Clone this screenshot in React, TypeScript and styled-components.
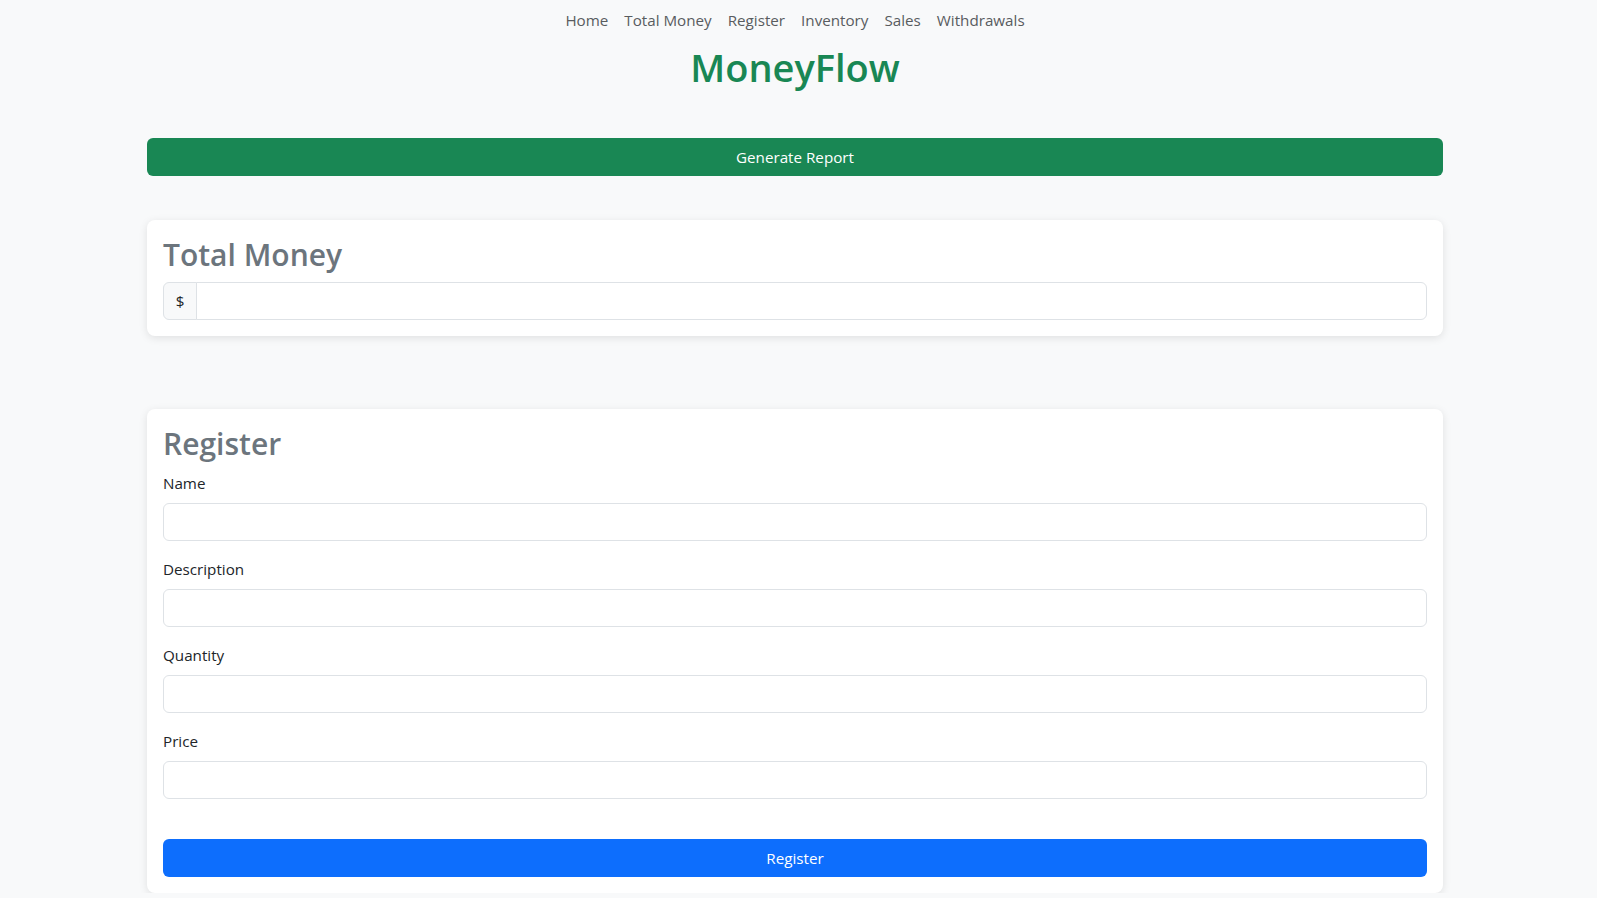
import React from "react";
import styled, { createGlobalStyle } from "styled-components";

const GlobalStyle = createGlobalStyle`
  html, body {
    margin: 0;
    padding: 0;
    background-color: #f8f9fa;
    font-family: "Open Sans", "Noto Sans", "Liberation Sans", sans-serif;
    color: #212529;
  }
  * {
    box-sizing: border-box;
  }
`;

const Page = styled.div`
  padding: 8px 7px 0 0;
`;

const Nav = styled.nav`
  display: flex;
  justify-content: center;
  gap: 16px;
  height: 24px;
  line-height: 24px;
`;

const NavLink = styled.a`
  font-size: 15.2px;
  color: #595c5f;
  text-decoration: none;
  cursor: pointer;
`;

const Title = styled.h1`
  margin: 11px 0 0;
  text-align: center;
  font-size: 38px;
  font-weight: 600;
  line-height: 48px;
  color: #198754;
`;

const Container = styled.main`
  width: 1296px;
  margin: 47px auto 0;
`;

const Button = styled.button<{ $variant: "success" | "primary" }>`
  display: block;
  width: 100%;
  height: 38px;
  border: none;
  border-radius: 6px;
  font-family: inherit;
  font-size: 15.2px;
  color: #fff;
  cursor: pointer;
  background-color: ${(p) => (p.$variant === "success" ? "#198754" : "#0d6efd")};
`;

const Card = styled.section<{ $top: number }>`
  margin-top: ${(p) => p.$top}px;
  padding: 16px;
  background-color: #fff;
  border-radius: 8px;
  box-shadow: 0 2px 8px rgba(0, 0, 0, 0.1);
`;

const CardTitle = styled.h2`
  margin: 0 0 8px;
  font-size: 30px;
  font-weight: 600;
  line-height: 38px;
  color: #6c757d;
`;

const InputGroup = styled.div`
  display: flex;
  height: 38px;
`;

const Addon = styled.span`
  display: flex;
  align-items: center;
  justify-content: center;
  width: 34px;
  background-color: #f8f9fa;
  border: 1px solid #dee2e6;
  border-radius: 6px 0 0 6px;
  font-size: 15.2px;
  color: #212529;
`;

const Input = styled.input<{ $grouped?: boolean }>`
  display: block;
  flex: 1;
  width: 100%;
  height: 38px;
  padding: 6px 12px;
  border: 1px solid #dee2e6;
  border-radius: ${(p) => (p.$grouped ? "0 6px 6px 0" : "6px")};
  margin-left: ${(p) => (p.$grouped ? "-1px" : "0")};
  font-family: inherit;
  font-size: 15.2px;
  background-color: #fff;
  outline: none;
`;

const Field = styled.div`
  margin-bottom: 16px;
`;

const Label = styled.label`
  display: block;
  margin-bottom: 8px;
  font-size: 15.2px;
  line-height: 24px;
  color: #212529;
`;

const SubmitRow = styled.div`
  padding-top: 24px;
`;

const links = ["Home", "Total Money", "Register", "Inventory", "Sales", "Withdrawals"];
const fields = ["Name", "Description", "Quantity", "Price"];

export default function App() {
  return (
    <Page>
      <GlobalStyle />
      <Nav>
        {links.map((l) => (
          <NavLink key={l}>{l}</NavLink>
        ))}
      </Nav>
      <Title>MoneyFlow</Title>
      <Container>
        <Button $variant="success">Generate Report</Button>
        <Card $top={44}>
          <CardTitle>Total Money</CardTitle>
          <InputGroup>
            <Addon>$</Addon>
            <Input $grouped />
          </InputGroup>
        </Card>
        <Card $top={73}>
          <CardTitle>Register</CardTitle>
          {fields.map((f) => (
            <Field key={f}>
              <Label>{f}</Label>
              <Input type="text" />
            </Field>
          ))}
          <SubmitRow>
            <Button $variant="primary">Register</Button>
          </SubmitRow>
        </Card>
      </Container>
    </Page>
  );
}
